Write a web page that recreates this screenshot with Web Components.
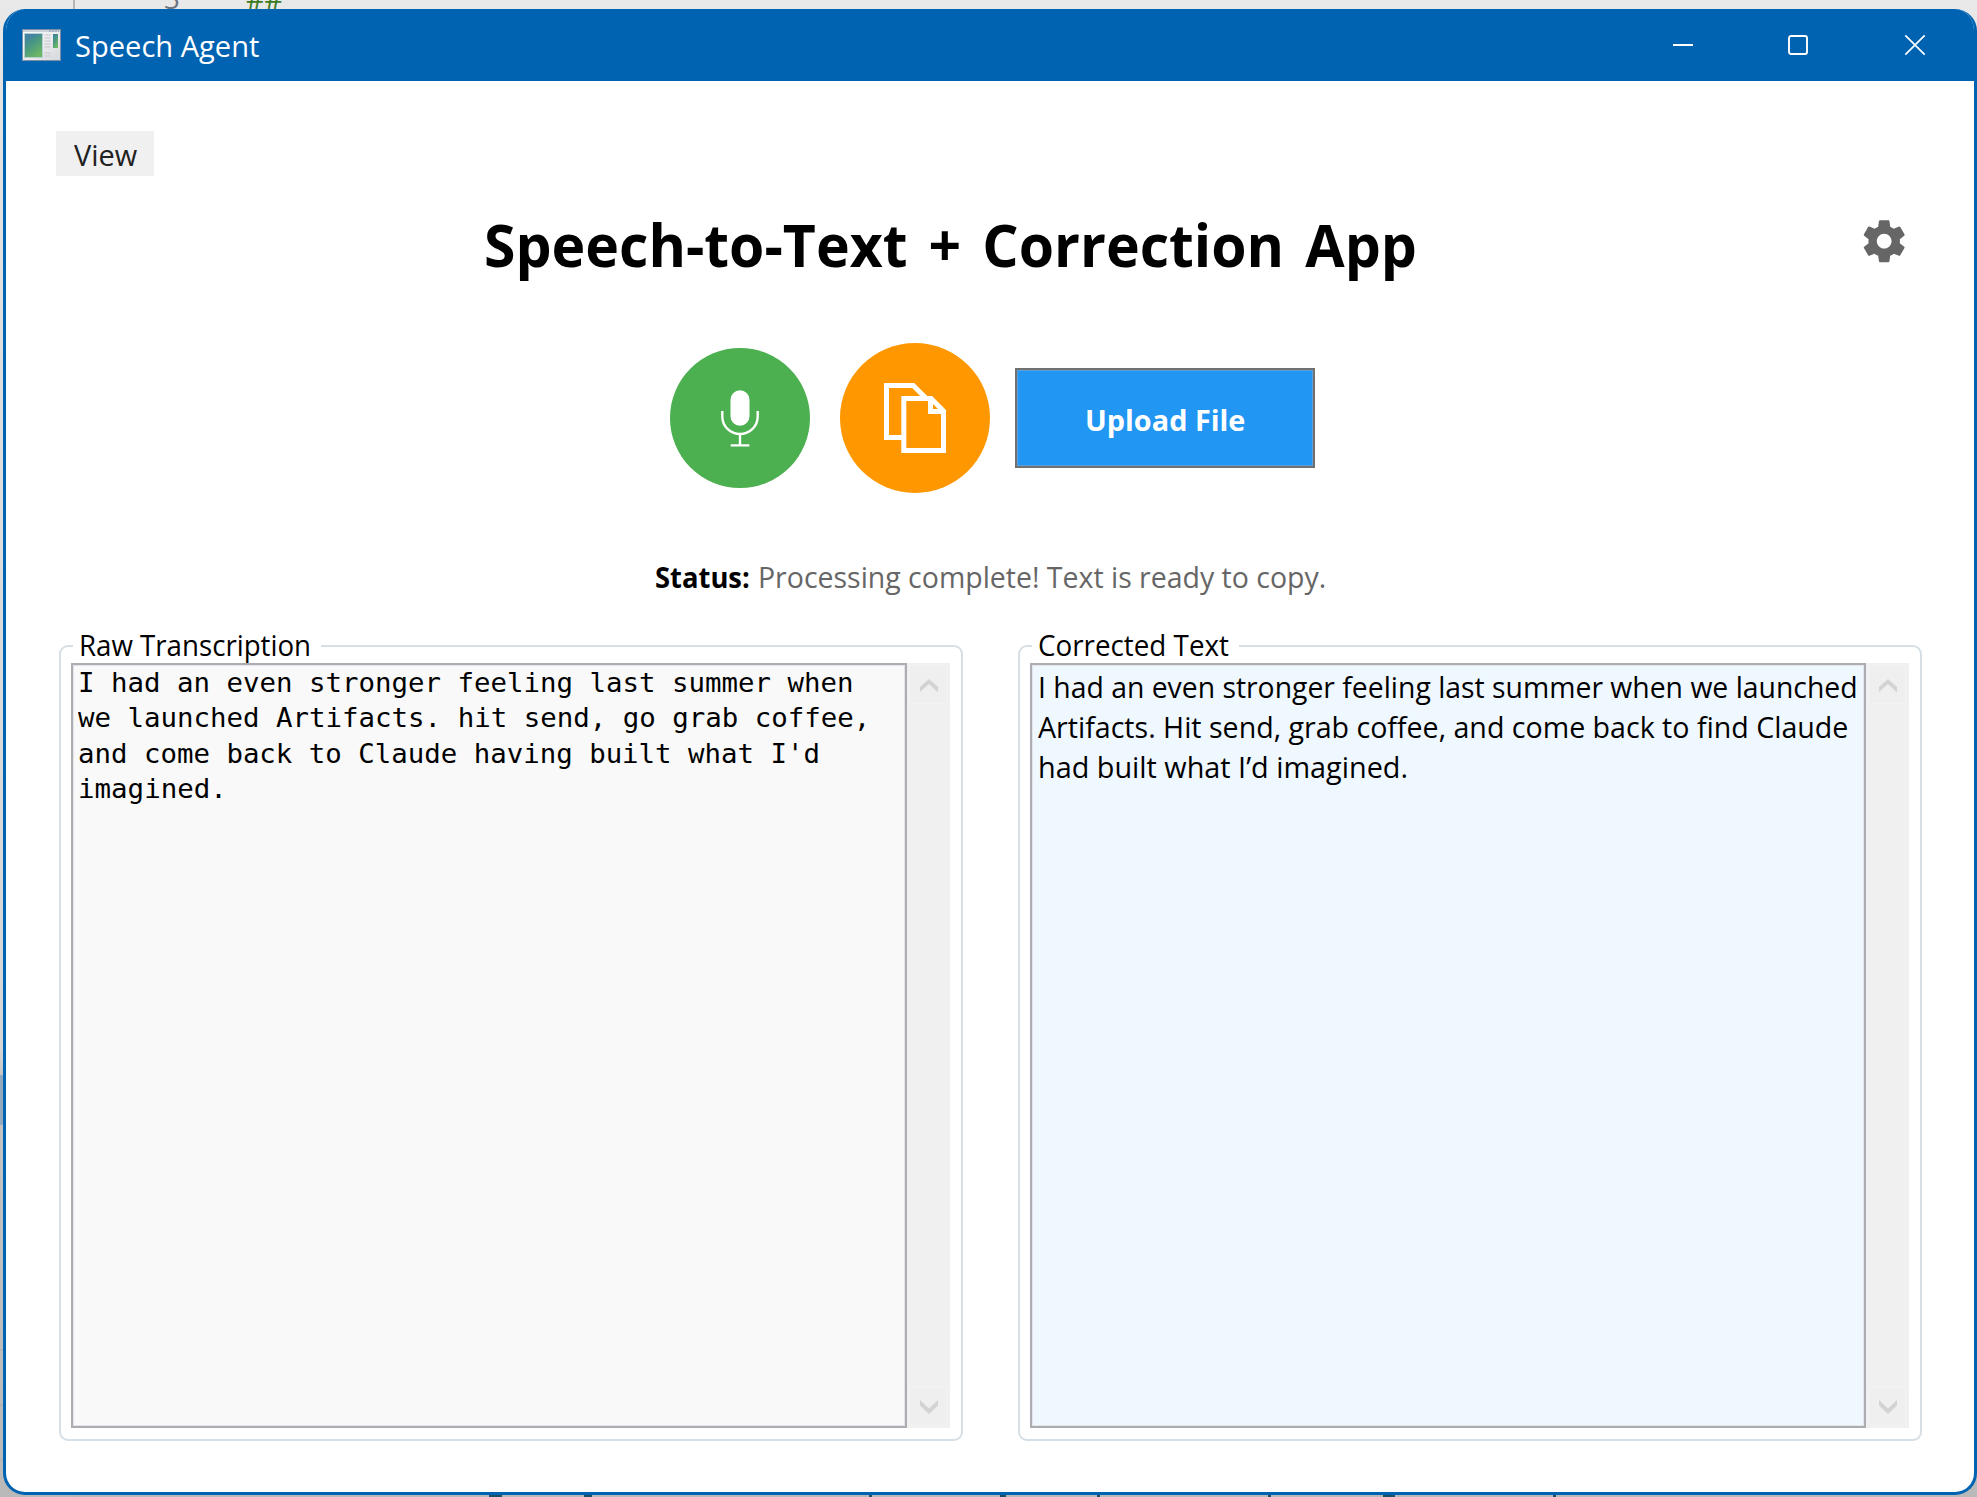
<!DOCTYPE html>
<html lang="en"><head><meta charset="utf-8"><title>Speech Agent</title>
<style>
html,body{margin:0;height:100%}
body{overflow:hidden;font-family:"Open Sans","Noto Sans",sans-serif;font-size:29.4px;color:#000}
</style></head><body>
<desk-top></desk-top>
<script>
const define=(name,html,setup)=>customElements.define(name,class extends HTMLElement{
  constructor(){super();this.attachShadow({mode:'open'}).innerHTML=html}
  connectedCallback(){if(setup)setup.call(this,this.shadowRoot)}
});

/* A line of text condensed or widened to the width given in w. */
define('fit-text',`<style>:host{display:block;white-space:pre;line-height:40px;height:40px}span{display:inline-block;transform-origin:0 50%}</style><span><slot></slot></span>`,function(r){
  const w=+this.getAttribute('w'),s=r.querySelector('span');
  this.style.width=w+'px';
  s.style.transform='scaleX('+w/s.offsetWidth+')';
});

define('app-icon',`<style>:host{display:block;width:39px;height:32px}svg{display:block}</style>
<svg width="39" height="32" viewBox="0 0 39 32"><defs><linearGradient id="g" x2=".6" y2="1"><stop stop-color="#3d7fa5"/><stop offset=".5" stop-color="#499783"/><stop offset="1" stop-color="#6cb765"/></linearGradient><linearGradient id="p" x2="1" y2="1"><stop stop-color="#fff"/><stop offset="1" stop-color="#d5d8dc"/></linearGradient></defs>
<rect x=".5" y=".5" width="38" height="31" fill="url(#p)" stroke="#7b8fa6"/><path d="M1 2h37" stroke="#cbd2dc" stroke-width="2"/><path d="M27 2h10" stroke="#7d8da2" stroke-dasharray="2 1"/>
<rect x="2.500" y="4.500" width="18" height="24" fill="url(#g)" stroke="#b6cfd0"/><path d="M4 13q8-7 16-7v-1H4z" fill="#4a7fae" opacity=".5"/>
<path d="M22.500 6h6M22.500 9h6M22.500 12h6M22.500 15h6M22.500 18h6M22.500 24h6M22.500 27h6" stroke="#c3c6ca" stroke-width="1.200"/><rect x="31" y="5" width="5" height="14" fill="url(#g)"/></svg>`);

define('window-controls',`<style>:host{display:flex;gap:95px;padding:26px 49px 0 0}svg{display:block;overflow:visible}</style>
<svg width="20" height="20"><path d="M0 10h20" stroke="#fff" stroke-width="2"/></svg>
<svg width="20" height="20"><rect x="1" y="1" width="18" height="18" rx="2" fill="none" stroke="#fff" stroke-width="1.900"/></svg>
<svg width="20" height="20" style="margin-left:2px"><path d="M.3.300 19.700 19.700M19.700.300.300 19.700" stroke="#fff" stroke-width="1.700"/></svg>`);

define('title-bar',`<style>:host{display:flex;height:72px;background:#0063b1;color:#fff;align-items:flex-start}app-icon{margin:20px 14px 0 19px}fit-text{margin-top:17px}window-controls{margin-left:auto}</style>
<app-icon></app-icon><fit-text w="184">Speech Agent</fit-text><window-controls></window-controls>`);

define('menu-button',`<style>:host{display:flex;width:98px;height:45px;background:#f0f0f0;color:#212121;justify-content:center}fit-text{margin-top:4px}</style><fit-text w="63"><slot></slot></fit-text>`);

define('gear-icon',`<style>:host{display:block}svg{display:block}</style><svg width="50.400" height="50.400" viewBox="0 0 24 24"><path fill="#666" d="M19.430 12.980c.04-.32.070-.64.070-.98s-.03-.66-.07-.98l2.110-1.650c.19-.15.240-.42.120-.64l-2-3.460c-.12-.22-.39-.3-.61-.22l-2.490 1c-.52-.4-1.080-.73-1.690-.98l-.38-2.650C14.460 2.180 14.250 2 14 2h-4c-.25 0-.46.180-.49.420l-.38 2.650c-.61.250-1.170.590-1.690.980l-2.490-1c-.23-.09-.49 0-.61.220l-2 3.460c-.13.220-.07.490.120.640l2.110 1.650c-.04.320-.07.650-.07.980s.03.660.070.980l-2.110 1.650c-.19.150-.24.420-.12.640l2 3.460c.12.220.390.300.610.220l2.490-1c.52.400 1.080.730 1.690.980l.38 2.650c.03.240.240.420.490.420h4c.25 0 .46-.18.490-.42l.38-2.650c.61-.25 1.170-.59 1.690-.98l2.490 1c.23.090.490 0 .61-.22l2-3.460c.12-.22.070-.49-.12-.64l-2.110-1.650zM12 15.500c-1.930 0-3.500-1.570-3.500-3.500s1.570-3.500 3.500-3.500 3.500 1.570 3.500 3.500-1.570 3.500-3.500 3.500z"/></svg>`);

define('app-header',`<style>:host{display:flex;height:70px}h1{margin:-2px auto 0 477.500px;font-size:59px;font-weight:700;word-spacing:6.500px}fit-text{line-height:70px;height:70px}gear-icon{margin:5px 65px 0 0}</style>
<h1><fit-text w="933">Speech-to-Text + Correction App</fit-text></h1><gear-icon></gear-icon>`);

define('mic-button',`<style>:host{display:block}svg{display:block}</style><svg width="140" height="140" viewBox="670 348 140 140"><circle cx="740" cy="418" r="70" fill="#4caf50"/><rect x="730.500" y="390.200" width="19" height="35.500" rx="9.500" fill="#fff"/><path d="M722.300 411v5.500a17.700 17.500 0 0 0 35.400 0V411M740 434v12M730.700 445.400h18.700" fill="none" stroke="#fff" stroke-width="2.400"/></svg>`);
define('copy-button',`<style>:host{display:block}svg{display:block}</style><svg width="150" height="150" viewBox="840 343 150 150"><circle cx="915" cy="418" r="75" fill="#ff9800"/><path d="M902 437.500H886.500V385.500H913.200L926.500 398.800" fill="none" stroke="#fff" stroke-width="5"/><path d="M903.800 398.500H931L943.500 411V450.500H903.800zM930.500 398V411.500H944" fill="none" stroke="#fff" stroke-width="5"/></svg>`);
define('upload-button',`<style>:host{display:flex;box-sizing:border-box;width:300px;height:100px;border:2px solid #707070;background:#2196f3;box-shadow:inset 0 0 0 1px #5ba0da;color:#fff;font-weight:700;justify-content:center}fit-text{margin-top:30px}</style><fit-text w="160"><slot></slot></fit-text>`);
define('tool-row',`<style>:host{display:flex;align-items:center;height:150px;padding-left:664px}copy-button{margin:0 25px 0 30px}</style><mic-button></mic-button><copy-button></copy-button><upload-button>Upload File</upload-button>`);
define('status-line',`<style>:host{display:flex;gap:8px;padding-left:649px}b{font-weight:700}.m{color:#666}</style><b><fit-text w="95">Status:</fit-text></b><fit-text class="m" w="568.500">Processing complete! Text is ready to copy.</fit-text>`);

define('scroll-bar',`<style>:host{display:flex;box-sizing:border-box;width:43px;padding:2px;background:#f0f0f0;flex-direction:column;justify-content:space-between}svg{display:block}</style>
<svg width="39" height="39"><path d="M.5.500h37v38h-37z" fill="#efefef" stroke="#f3f3f3"/><path d="M11 25.500V22L20 14l9 8v5.500L20 19l-9 8z" fill="#d3d3d3"/></svg>
<svg width="39" height="39"><path d="M.5.500h37v38h-37z" fill="#efefef" stroke="#f3f3f3"/><path d="M11 13v5.500L20 27l9-8.500V13l-9 8.500z" fill="#d3d3d3"/></svg>`);

/* Group box: legend breaks the top border; the text area sits over its descenders. */
define('group-box',`<style>:host{display:grid;width:904px;height:796px;box-sizing:border-box;grid-template:100%/100%}
.frame,.stack{grid-area:1/1}.frame{border:2px solid #d5dfe5;border-radius:9px}
.stack{display:flex;flex-direction:column;padding:0 13px 13px 12px}
.legend{align-self:flex-start;background:#fff;height:38px;margin:-20px 0 0 2px;padding:0 10px 0 5.500px}
.row{display:flex;flex:1;position:relative}
.text{flex:1;border:2px solid #abadb3;background:var(--fill);box-shadow:inset 0 0 0 1px #e3e5e9}</style>
<div class="frame"></div><div class="stack"><div class="legend"><slot name="legend"></slot></div><div class="row"><div class="text"><slot></slot></div><scroll-bar></scroll-bar></div></div>`);

define('transcript-panels',`<style>:host{display:flex;gap:55px;padding-left:53px}.raw{--fill:#f9f9f9}.fixed{--fill:#f0f8ff}
.mono{font-family:"DejaVu Sans Mono",monospace;font-size:27px;padding:0 5px}.mono fit-text{height:35.250px;line-height:35.250px}.sans{padding:2px 5.500px}</style>
<group-box class="raw"><fit-text slot="legend" w="232.500">Raw Transcription</fit-text><div class="mono">
<fit-text w="775.500">I had an even stronger feeling last summer when</fit-text><fit-text w="792">we launched Artifacts. hit send, go grab coffee,</fit-text><fit-text w="742.500">and come back to Claude having built what I'd</fit-text><fit-text w="148.500">imagined.</fit-text></div></group-box>
<group-box class="fixed"><fit-text slot="legend" w="191">Corrected Text</fit-text><div class="sans">
<fit-text w="820">I had an even stronger feeling last summer when we launched</fit-text><fit-text w="810">Artifacts. Hit send, grab coffee, and come back to find Claude</fit-text><fit-text w="370.500">had built what I’d imagined.</fit-text></div></group-box>`);

define('app-window',`<style>:host{display:flex;flex-direction:column;box-sizing:border-box;width:1974px;height:1486px;border:3px solid #0063b1;border-top:0;border-radius:22px;overflow:hidden;background:#fff}title-bar{margin:0 0 0 -3px;padding-left:0}
menu-button{margin:50px 0 0 50px}app-header{margin-top:35px}tool-row{margin-top:62px}status-line{margin-top:64px}transcript-panels{margin-top:48px}</style>
<title-bar></title-bar><menu-button>View</menu-button><app-header></app-header><tool-row></tool-row><status-line></status-line><transcript-panels></transcript-panels>`);

define('desk-top',`<style>:host{display:block;position:relative;width:1977px;height:1497px;overflow:hidden;background:linear-gradient(#e9e9e9,#e2e2e2 6%,#d6d6d6 70%,#c4c4c4 72%,#b9b9b9)}
app-window{position:absolute;left:3px;top:9px}.n,.h{position:absolute;top:-22px}.n{left:164px;color:#6e7681}.h{left:246px;color:#3d7a1e}
svg{position:absolute;left:0;top:0}</style>
<svg width="1977" height="1497"><path d="M74 0v9M74 1494v3M0 1350h3M0 1405h3M0 1460h3" stroke="#b4b4b4" stroke-width="2"/><path d="M0 1075h3v50H0z" fill="#91a8bd"/>
<path d="M489 1496h13M584 1496h8M869 1496h3M1000 1496h6M1097 1496h3M1268 1496h3M1383 1496h12M1553 1496h3" stroke="#1b5069" stroke-width="2"/></svg>
<fit-text class="n" w="16">3</fit-text><fit-text class="h" w="37">##</fit-text><app-window></app-window>`);
</script></body></html>
